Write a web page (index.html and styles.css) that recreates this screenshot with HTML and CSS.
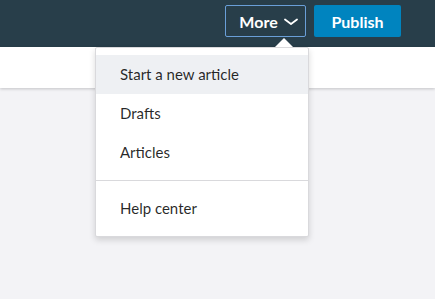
FILE: index.html
```html
<!DOCTYPE html>
<html lang="en">
<head>
    <meta charset="UTF-8">
    <meta name="viewport" content="width=device-width, initial-scale=1.0">
    <title>Writer</title>
    <link rel="stylesheet" href="styles.css">
</head>
<body>
    <header class="topbar">
        <div class="actions">
            <div class="more-wrap">
                <button class="more-btn">More
                    <svg class="chevron" width="14" height="8" viewBox="0 0 14 8">
                        <polyline points="1,1.5 7,6 13,1.5" fill="none" stroke="#fff" stroke-width="1.8" stroke-linecap="round" stroke-linejoin="round"/>
                    </svg>
                </button>
                <div class="dropdown">
                    <span class="caret"></span>
                    <ul class="menu">
                        <li class="item active">Start a new article</li>
                        <li class="item">Drafts</li>
                        <li class="item">Articles</li>
                    </ul>
                    <ul class="menu divided">
                        <li class="item">Help center</li>
                    </ul>
                </div>
            </div>
            <button class="publish-btn">Publish</button>
        </div>
    </header>
    <div class="subbar"></div>
    <main class="content"></main>
</body>
</html>
```

FILE: styles.css
```css
* {
    box-sizing: border-box;
}

body {
    margin: 0;
    font-family: "Source Sans Pro", Lato, "Noto Sans", sans-serif;
    background-color: #f3f3f6;
    height: 299px;
    overflow: hidden;
}

.topbar {
    height: 47px;
    background-color: #283e4a;
    display: flex;
    justify-content: flex-end;
    padding: 5px 34px 0 0;
}

.actions {
    display: flex;
    gap: 8px;
    height: 32px;
}

.more-wrap {
    position: relative;
}

.more-btn {
    width: 81px;
    height: 32px;
    display: flex;
    align-items: center;
    justify-content: center;
    gap: 6px;
    padding: 0 0 0 6px;
    background: transparent;
    border: 1px solid #6a9fd8;
    border-radius: 2px;
    color: #fff;
    font-family: inherit;
    font-size: 16px;
    font-weight: bold;
}

.chevron {
    margin-top: 2px;
}

.publish-btn {
    width: 87px;
    height: 32px;
    background-color: #0084bf;
    border: none;
    border-radius: 2px;
    color: #fff;
    font-family: inherit;
    font-size: 16px;
    font-weight: bold;
}

.subbar {
    height: 41px;
    background: #fff;
    box-shadow: 0 1px 3px rgba(0, 0, 0, 0.2);
}

.dropdown {
    position: absolute;
    top: 42px;
    right: -3px;
    width: 214px;
    background: #fff;
    border: 1px solid #d9d9dc;
    border-radius: 2px;
    box-shadow: 0 3px 6px rgba(0, 0, 0, 0.15);
    z-index: 10;
}

.caret {
    position: absolute;
    top: -10px;
    right: 15px;
    width: 0;
    height: 0;
    border-left: 9px solid transparent;
    border-right: 9px solid transparent;
    border-bottom: 9px solid #fff;
}

.menu {
    list-style: none;
    margin: 0;
    padding: 7px 0 8px;
}

.menu.divided {
    border-top: 1px solid #d9d9dc;
    padding-top: 8px;
}

.item {
    height: 39px;
    line-height: 39px;
    padding-left: 24px;
    font-size: 15px;
    color: rgba(0, 0, 0, 0.85);
}

.item.active {
    background-color: #eef0f3;
}
```
